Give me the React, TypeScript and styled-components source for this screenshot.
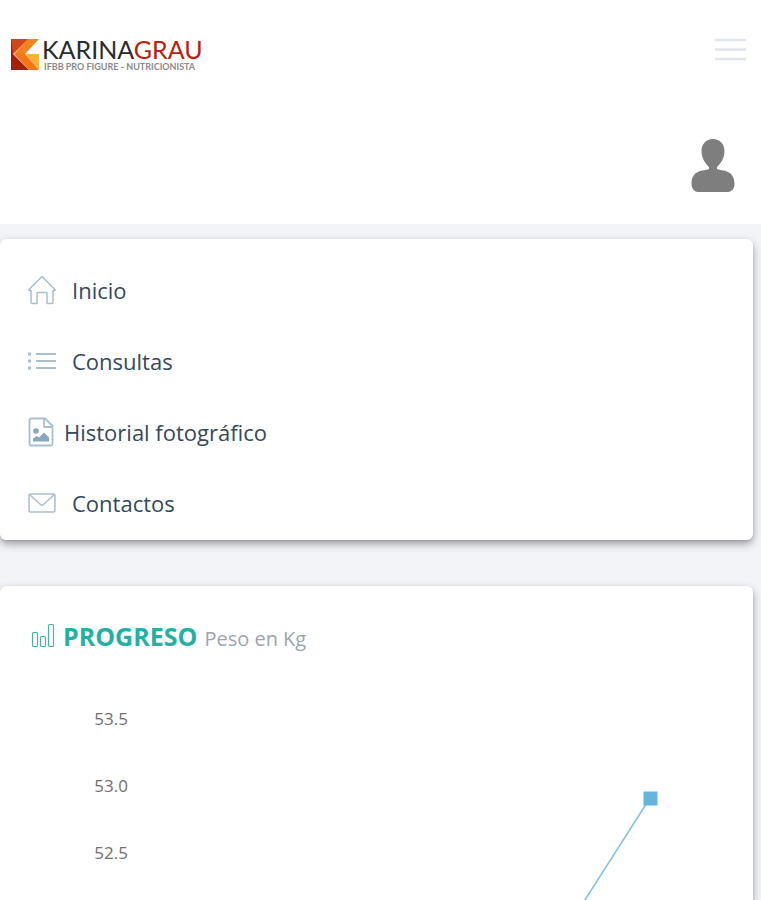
import React from "react";
import styled, { createGlobalStyle } from "styled-components";

const GlobalStyle = createGlobalStyle`
  * { box-sizing: border-box; }
  body {
    margin: 0;
    background: #f2f4f8;
    font-family: "Open Sans", sans-serif;
    color: #34495e;
  }
`;

const Page = styled.div`
  display: flex;
  flex-direction: column;
  height: 100vh;
  overflow: hidden;
`;

const Header = styled.header`
  flex: none;
  background: #fff;
  padding: 27px 15px 31px 10px;
`;

const TopBar = styled.div`
  display: flex;
  align-items: center;
  justify-content: space-between;
  height: 44px;
`;

const Brand = styled.a`
  display: flex;
  align-items: center;
  gap: 2px;
  padding-top: 10px;
  text-decoration: none;
  font-family: Lato, sans-serif;
`;

const BrandText = styled.span`
  display: flex;
  flex-direction: column;
`;

const BrandName = styled.span`
  font-size: 25px;
  line-height: 25px;
  color: #2b2b2b;
`;

const BrandAccent = styled.span`
  color: #b8200f;
`;

const Tagline = styled.span`
  padding-left: 2px;
  font-size: 9px;
  line-height: 10px;
  font-weight: 700;
  color: #8a8a8a;
`;

const MenuToggle = styled.button`
  display: flex;
  padding: 0;
  border: 0;
  background: none;
  cursor: pointer;
`;

const AccountRow = styled.div`
  display: flex;
  justify-content: flex-end;
  padding: 66px 11px 0 0;
`;

const AccountButton = styled(MenuToggle)``;

const Content = styled.main`
  display: flex;
  flex-direction: column;
  flex: 1;
  gap: 46px;
  min-height: 0;
  padding: 15px 8px 0 0;
`;

const MenuCard = styled.nav`
  flex: none;
  padding: 15px 0 2px;
  background: #fff;
  border-radius: 6px;
  box-shadow: 0 4px 8px rgba(0, 0, 0, 0.36), 0 1px 2px rgba(0, 0, 0, 0.1);
`;

const MenuList = styled.ul`
  margin: 0;
  padding: 0;
  list-style: none;
`;

const MenuLink = styled.a<{ $gap: number }>`
  display: flex;
  align-items: center;
  gap: ${(p) => p.$gap}px;
  height: 71px;
  padding-left: 28px;
  color: #34495e;
  font-size: 22px;
  line-height: 30px;
  text-decoration: none;
`;

const ChartCard = styled.section`
  flex: 1;
  min-height: 0;
  overflow: hidden;
  background: #fff;
  border-radius: 6px 6px 0 0;
  box-shadow: 0 4px 8px rgba(0, 0, 0, 0.36), 0 1px 2px rgba(0, 0, 0, 0.1);
`;

const ChartHeading = styled.header`
  display: flex;
  align-items: baseline;
  gap: 7px;
  padding: 32px 31px 0;
`;

const ChartTitle = styled.h2`
  margin: 0;
  color: #26b0a4;
  font-size: 25px;
  line-height: 36px;
  font-weight: 700;
`;

const ChartUnit = styled.span`
  color: #9ba5b1;
  font-size: 20px;
  line-height: 36px;
`;

const Plot = styled.svg`
  display: block;
  width: 100%;
  margin-top: 29px;
`;

const AxisLabel = styled.text`
  font-size: 17px;
  fill: #707070;
`;

const LogoMark = () => (
  <svg width="30" height="32" viewBox="-1 -1 30 32" aria-hidden="true">
    <path d="M0 0H17L2 15L0 16Z" fill="#cf4015" />
    <path d="M0 0L2 15L18 31H0Z" fill="#a3200c" />
    <path d="M0 0H17L3 14Z" fill="#d1471a" />
    <path d="M17 0H28L14 15H3Z" fill="#f58220" />
    <path d="M3 15H14L28 31H18Z" fill="#f3761d" />
    <path d="M14 15H28V31Z" fill="#ffb03a" />
  </svg>
);

const BarsIcon = () => (
  <svg width="31" height="24" viewBox="0 0 31 24" stroke="#dfe5ec" strokeWidth="2.500" aria-hidden="true">
    <path d="M0 3H31M0 12.500H31M0 22H31" />
  </svg>
);

const UserIcon = () => (
  <svg width="44" height="56" viewBox="0 0 44 56" fill="#7e7e7e" aria-hidden="true">
    <path d="M22 2C29 2 33.500 7 33.500 14C33.500 21 30 26 26 30V32C28 34 43.500 31 43.500 47C43.500 52 40 55 37 55H7C4 55 .5 52 .5 47C.5 31 16 34 18 32V30C14 26 10.500 21 10.500 14C10.500 7 15 2 22 2Z" />
  </svg>
);

const line = { fill: "none", stroke: "#a9bfce", strokeWidth: 1.5 };

const HomeIcon = () => (
  <svg width="28" height="30" viewBox="0 0 28 30" {...line} strokeLinejoin="round" strokeLinecap="round" aria-hidden="true">
    <path d="M1 14.500L14 1.500L27 14.500V15.500H25V27Q25 28.500 23.500 28.500H19V18.500Q19 17.500 18 17.500H10Q9 17.500 9 18.500V28.500H4.500Q3 28.500 3 27V15.500H1Z" />
  </svg>
);

const ListIcon = () => (
  <svg width="28" height="20" viewBox="0 0 28 20" {...line} aria-hidden="true">
    <path d="M8 3H28M8 10H28M8 17H28" strokeWidth="1.800" />
    <path d="M0 3H3M0 10H3M0 17H3" strokeWidth="3" />
  </svg>
);

const PhotoIcon = () => (
  <svg width="26" height="30" viewBox="0 0 26 30" {...line} strokeLinejoin="round" aria-hidden="true">
    <path d="M3 1.500H17L24.500 9V26Q24.500 28.500 22.500 28.500H3Q1.500 28.500 1.500 26.500V3Q1.500 1.500 3 1.500ZM16 2V9Q16 10 17 10H24" strokeWidth="1.800" />
    <circle cx="8" cy="14" r="2.800" fill="#8aa8bd" stroke="none" />
    <path d="M5 24.500V21.500L9 19L11 20.500L16 15.500L21 20.500V24.500Z" fill="#8aa8bd" stroke="none" />
  </svg>
);

const MailIcon = () => (
  <svg width="28" height="20" viewBox="0 0 28 20" {...line} strokeLinejoin="round" aria-hidden="true">
    <rect x="1" y="1" width="26" height="18" rx="1.500" />
    <path d="M1.500 1.500L12.500 11.500Q14 12.800 15.500 11.500L26.500 1.500" />
  </svg>
);

const ChartIcon = () => (
  <svg width="25" height="24" viewBox="0 2 25 24" overflow="visible" fill="none" stroke="#45b8a5" strokeWidth="1.200" aria-hidden="true">
    <rect x="1.500" y="12.500" width="5" height="14" rx="1" />
    <rect x="9.500" y="16.500" width="5" height="10" rx="1" />
    <rect x="17.500" y="4.500" width="5" height="22" rx="1" />
  </svg>
);

const menu = [
  { label: "Inicio", href: "#inicio", icon: <HomeIcon />, gap: 16 },
  { label: "Consultas", href: "#consultas", icon: <ListIcon />, gap: 16 },
  { label: "Historial fotográfico", href: "#historial", icon: <PhotoIcon />, gap: 10 },
  { label: "Contactos", href: "#contactos", icon: <MailIcon />, gap: 16 },
];

const ticks = [
  { value: "53.5", y: 39 },
  { value: "53.0", y: 106 },
  { value: "52.5", y: 173 },
];

export default function App() {
  return (
    <>
      <GlobalStyle />
      <Page>
        <Header>
          <TopBar>
            <Brand href="#inicio">
              <LogoMark />
              <BrandText>
                <BrandName>
                  KARINA<BrandAccent>GRAU</BrandAccent>
                </BrandName>
                <Tagline>IFBB PRO FIGURE - NUTRICIONISTA</Tagline>
              </BrandText>
            </Brand>
            <MenuToggle type="button" aria-label="Menú">
              <BarsIcon />
            </MenuToggle>
          </TopBar>
          <AccountRow>
            <AccountButton type="button" aria-label="Cuenta">
              <UserIcon />
            </AccountButton>
          </AccountRow>
        </Header>
        <Content>
          <MenuCard>
            <MenuList>
              {menu.map((item) => (
                <li key={item.href}>
                  <MenuLink href={item.href} $gap={item.gap}>
                    {item.icon}
                    {item.label}
                  </MenuLink>
                </li>
              ))}
            </MenuList>
          </MenuCard>
          <ChartCard>
            <ChartHeading>
              <ChartIcon />
              <ChartTitle>PROGRESO</ChartTitle>
              <ChartUnit>Peso en Kg</ChartUnit>
            </ChartHeading>
            <Plot viewBox="0 0 753 217" role="img" aria-label="Peso en Kg">
              {ticks.map((tick) => (
                <AxisLabel key={tick.value} x="128" y={tick.y} textAnchor="end">
                  {tick.value}
                </AxisLabel>
              ))}
              <path d="M650 112L583 217" stroke="#7fc0e2" strokeWidth="1.500" />
              <rect x="643.500" y="105.500" width="14" height="14" fill="#67b5dc" />
            </Plot>
          </ChartCard>
        </Content>
      </Page>
    </>
  );
}
